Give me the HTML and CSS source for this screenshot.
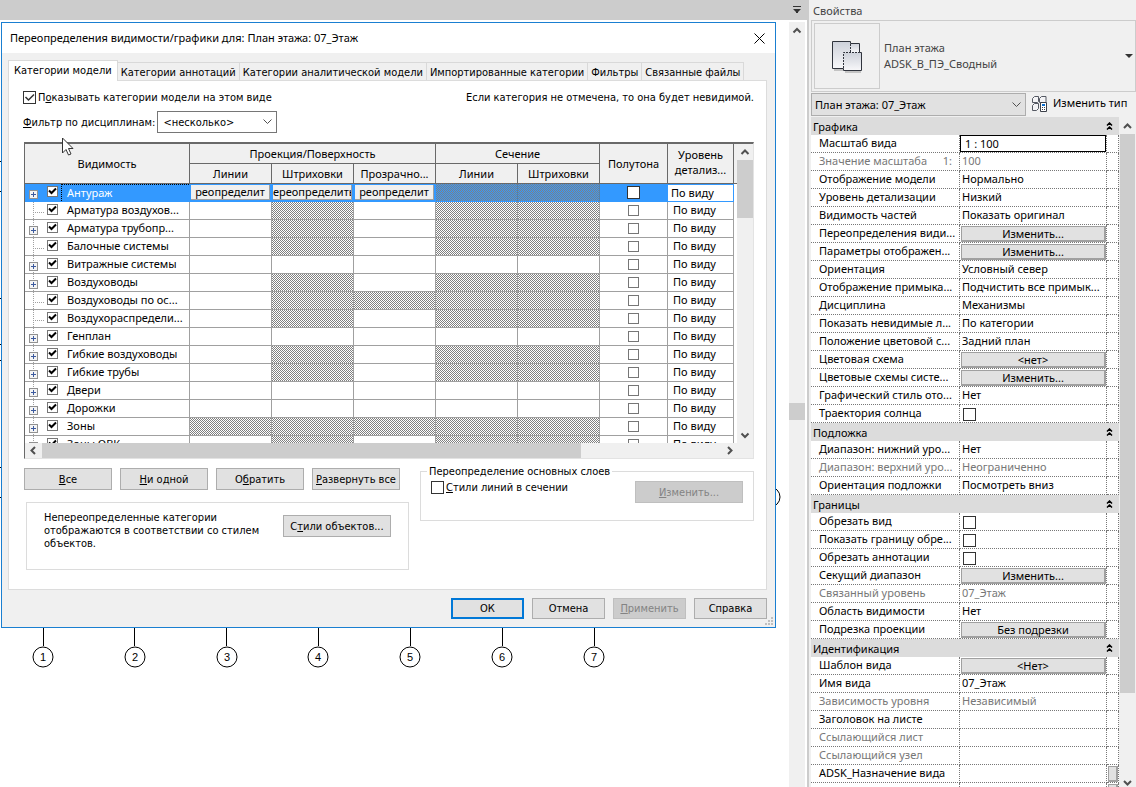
FILE: index.html
```html
<!DOCTYPE html>
<html lang="ru">

<head>
    <meta charset="UTF-8">
    <meta name="viewport" content="width=device-width, initial-scale=1.0">
    <title>Переопределения видимости/графики</title>
    <link rel="stylesheet" href="styles.css">
</head>

<body>
    <main class="workspace">
        <div class="view-bar">
            <button class="view-menu" aria-label="Список видов">
                <svg width="10" height="8" viewBox="0 0 10 8"><path d="M1 0h8v1H1zM1 3h8L6 6v1H4V6z" fill="#333" /></svg>
            </button>
        </div>
        <div class="view">
            <div class="canvas">
                <!-- Drawing with the grid axes -->
                <svg class="drawing" width="789" height="767" viewBox="0 0 789 767">
                    <path d="M0 141.500h2M0 171.500h2M0 278.500h2M0 324.500h2M0 340.500h2M0 447.500h2M0 477.500h2" stroke="#000" />
                    <g fill="none" stroke="#000">
                        <path d="M43.500 607v19M134.500 607v19M226.500 607v19M318.500 607v19M410.500 607v19M502.500 607v19M594.500 607v19" />
                        <circle cx="43" cy="637" r="10" />
                        <circle cx="135" cy="637" r="10" />
                        <circle cx="227" cy="637" r="10" />
                        <circle cx="318" cy="637" r="10" />
                        <circle cx="410" cy="637" r="10" />
                        <circle cx="502" cy="637" r="10" />
                        <circle cx="594" cy="637" r="10" />
                        <circle cx="770" cy="477" r="10" />
                    </g>
                    <g class="axis-labels">
                        <text x="43" y="641">1</text>
                        <text x="135" y="641">2</text>
                        <text x="227" y="641">3</text>
                        <text x="318" y="641">4</text>
                        <text x="410" y="641">5</text>
                        <text x="502" y="641">6</text>
                        <text x="594" y="641">7</text>
                    </g>
                </svg>

                <section class="dialog">
                    <header class="dialog-title">
                        <h1>Переопределения видимости/графики для: План этажа: 07_Этаж</h1>
                        <button class="close" aria-label="Закрыть">
                            <svg width="11" height="11" viewBox="0 0 11 11"><path d="M0.500 0.500l10 10M10.500 0.500l-10 10" stroke="#000" /></svg>
                        </button>
                    </header>

                    <div class="dialog-body">
                        <nav class="tabs">
                            <button class="tab active">Категории модели</button>
                            <button class="tab">Категории аннотаций</button>
                            <button class="tab">Категории аналитической модели</button>
                            <button class="tab">Импортированные категории</button>
                            <button class="tab">Фильтры</button>
                            <button class="tab">Связанные файлы</button>
                        </nav>

                        <div class="tab-panel">
                            <div class="option-row">
                                <label class="option"><input type="checkbox" class="check thin" checked><span>П<u>о</u>казывать категории модели на этом виде</span></label>
                                <span>Если категория не отмечена, то она будет невидимой.</span>
                            </div>
                            <div class="filter-row">
                                <label for="discipline"><u>Ф</u>ильтр по дисциплинам:</label>
                                <select id="discipline" class="discipline">
                                    <option>&lt;несколько&gt;</option>
                                </select>
                            </div>

                            <div class="grid-box">
                                <div class="grid-view">
                                    <table class="categories">
                                        <colgroup>
                                            <col class="col-name">
                                            <col class="col-style">
                                            <col class="col-style">
                                            <col class="col-style">
                                            <col class="col-style">
                                            <col class="col-style">
                                            <col class="col-half">
                                            <col class="col-level">
                                        </colgroup>
                                        <thead>
                                            <tr>
                                                <th rowspan="2">Видимость</th>
                                                <th colspan="3">Проекция/Поверхность</th>
                                                <th colspan="2">Сечение</th>
                                                <th rowspan="2">Полутона</th>
                                                <th rowspan="2" class="two-lines">Уровень детализ...</th>
                                            </tr>
                                            <tr>
                                                <th>Линии</th>
                                                <th>Штриховки</th>
                                                <th>Прозрачно...</th>
                                                <th>Линии</th>
                                                <th>Штриховки</th>
                                            </tr>
                                        </thead>
                                        <tbody>
                                            <tr class="selected">
                                                <td><div class="node first"><button class="expander" aria-label="Развернуть"></button><label><input type="checkbox" class="check" checked><span>Антураж</span></label></div></td>
                                                <td><button class="override">реопределит</button></td>
                                                <td><button class="override">ереопределить</button></td>
                                                <td><button class="override">реопределит</button></td>
                                                <td class="off"></td>
                                                <td class="off"></td>
                                                <td class="half"><input type="checkbox" class="check large" aria-label="Полутона"></td>
                                                <td class="level">По виду</td>
                                            </tr>
                                            <tr>
                                                <td><div class="node"><i class="leaf"></i><label><input type="checkbox" class="check" checked><span>Арматура воздухов...</span></label></div></td>
                                                <td></td><td class="off"></td><td></td><td class="off"></td><td class="off"></td>
                                                <td class="half"><input type="checkbox" class="check" aria-label="Полутона"></td>
                                                <td class="level">По виду</td>
                                            </tr>
                                            <tr>
                                                <td><div class="node"><button class="expander" aria-label="Развернуть"></button><label><input type="checkbox" class="check" checked><span>Арматура трубопр...</span></label></div></td>
                                                <td></td><td class="off"></td><td></td><td class="off"></td><td class="off"></td>
                                                <td class="half"><input type="checkbox" class="check" aria-label="Полутона"></td>
                                                <td class="level">По виду</td>
                                            </tr>
                                            <tr>
                                                <td><div class="node"><i class="leaf"></i><label><input type="checkbox" class="check" checked><span>Балочные системы</span></label></div></td>
                                                <td></td><td class="off"></td><td></td><td class="off"></td><td class="off"></td>
                                                <td class="half"><input type="checkbox" class="check" aria-label="Полутона"></td>
                                                <td class="level">По виду</td>
                                            </tr>
                                            <tr>
                                                <td><div class="node"><button class="expander" aria-label="Развернуть"></button><label><input type="checkbox" class="check" checked><span>Витражные системы</span></label></div></td>
                                                <td></td><td></td><td></td><td></td><td></td>
                                                <td class="half"><input type="checkbox" class="check" aria-label="Полутона"></td>
                                                <td class="level">По виду</td>
                                            </tr>
                                            <tr>
                                                <td><div class="node"><button class="expander" aria-label="Развернуть"></button><label><input type="checkbox" class="check" checked><span>Воздуховоды</span></label></div></td>
                                                <td></td><td class="off"></td><td></td><td class="off"></td><td class="off"></td>
                                                <td class="half"><input type="checkbox" class="check" aria-label="Полутона"></td>
                                                <td class="level">По виду</td>
                                            </tr>
                                            <tr>
                                                <td><div class="node"><i class="leaf"></i><label><input type="checkbox" class="check" checked><span>Воздуховоды по ос...</span></label></div></td>
                                                <td></td><td class="off"></td><td class="off"></td><td class="off"></td><td class="off"></td>
                                                <td class="half"><input type="checkbox" class="check" aria-label="Полутона"></td>
                                                <td class="level">По виду</td>
                                            </tr>
                                            <tr>
                                                <td><div class="node"><i class="leaf"></i><label><input type="checkbox" class="check" checked><span>Воздухораспредели...</span></label></div></td>
                                                <td></td><td class="off"></td><td></td><td class="off"></td><td class="off"></td>
                                                <td class="half"><input type="checkbox" class="check" aria-label="Полутона"></td>
                                                <td class="level">По виду</td>
                                            </tr>
                                            <tr>
                                                <td><div class="node"><button class="expander" aria-label="Развернуть"></button><label><input type="checkbox" class="check" checked><span>Генплан</span></label></div></td>
                                                <td></td><td></td><td></td><td></td><td></td>
                                                <td class="half"><input type="checkbox" class="check" aria-label="Полутона"></td>
                                                <td class="level">По виду</td>
                                            </tr>
                                            <tr>
                                                <td><div class="node"><button class="expander" aria-label="Развернуть"></button><label><input type="checkbox" class="check" checked><span>Гибкие воздуховоды</span></label></div></td>
                                                <td></td><td class="off"></td><td></td><td class="off"></td><td class="off"></td>
                                                <td class="half"><input type="checkbox" class="check" aria-label="Полутона"></td>
                                                <td class="level">По виду</td>
                                            </tr>
                                            <tr>
                                                <td><div class="node"><button class="expander" aria-label="Развернуть"></button><label><input type="checkbox" class="check" checked><span>Гибкие трубы</span></label></div></td>
                                                <td></td><td class="off"></td><td></td><td class="off"></td><td class="off"></td>
                                                <td class="half"><input type="checkbox" class="check" aria-label="Полутона"></td>
                                                <td class="level">По виду</td>
                                            </tr>
                                            <tr>
                                                <td><div class="node"><button class="expander" aria-label="Развернуть"></button><label><input type="checkbox" class="check" checked><span>Двери</span></label></div></td>
                                                <td></td><td></td><td></td><td></td><td></td>
                                                <td class="half"><input type="checkbox" class="check" aria-label="Полутона"></td>
                                                <td class="level">По виду</td>
                                            </tr>
                                            <tr>
                                                <td><div class="node"><button class="expander" aria-label="Развернуть"></button><label><input type="checkbox" class="check" checked><span>Дорожки</span></label></div></td>
                                                <td></td><td></td><td></td><td></td><td></td>
                                                <td class="half"><input type="checkbox" class="check" aria-label="Полутона"></td>
                                                <td class="level">По виду</td>
                                            </tr>
                                            <tr>
                                                <td><div class="node"><button class="expander" aria-label="Развернуть"></button><label><input type="checkbox" class="check" checked><span>Зоны</span></label></div></td>
                                                <td class="off"></td><td class="off"></td><td class="off"></td><td class="off"></td><td class="off"></td>
                                                <td class="half"><input type="checkbox" class="check" aria-label="Полутона"></td>
                                                <td class="level">По виду</td>
                                            </tr>
                                            <tr>
                                                <td><div class="node"><button class="expander" aria-label="Развернуть"></button><label><input type="checkbox" class="check" checked><span>Зоны ОВК</span></label></div></td>
                                                <td></td><td class="off"></td><td></td><td class="off"></td><td class="off"></td>
                                                <td class="half"><input type="checkbox" class="check" aria-label="Полутона"></td>
                                                <td class="level">По виду</td>
                                            </tr>
                                        </tbody>
                                    </table>
                                </div>
                                <div class="vscroll grid-vscroll">
                                    <svg width="16" height="16" viewBox="0 0 16 16"><path d="M4.500 10L8 6.500L11.500 10" class="arrow" /></svg>
                                    <div class="thumb"></div>
                                    <svg width="16" height="16" viewBox="0 0 16 16"><path d="M4.500 6.500L8 10L11.500 6.500" class="arrow" /></svg>
                                </div>
                                <div class="hscroll">
                                    <svg width="17" height="15" viewBox="0 0 17 15"><path d="M10 4L6.500 7.500L10 11" class="arrow" /></svg>
                                    <div class="thumb"></div>
                                    <svg width="17" height="15" viewBox="0 0 17 15"><path d="M7 4L10.500 7.500L7 11" class="arrow" /></svg>
                                </div>
                            </div>

                            <div class="below">
                                <div class="below-left">
                                    <div class="buttons">
                                        <button class="btn"><u>В</u>се</button>
                                        <button class="btn"><u>Н</u>и одной</button>
                                        <button class="btn">О<u>б</u>ратить</button>
                                        <button class="btn"><u>Р</u>азвернуть все</button>
                                    </div>
                                    <div class="note">
                                        <p>Непереопределенные категории отображаются в соответствии со стилем объектов.</p>
                                        <button class="btn wide">С<u>т</u>или объектов...</button>
                                    </div>
                                </div>
                                <fieldset class="layers">
                                    <legend>Переопределение основных слоев</legend>
                                    <label class="option"><input type="checkbox" class="check thin"><span><u>С</u>тили линий в сечении</span></label>
                                    <button class="btn wide" disabled><u>И</u>зменить...</button>
                                </fieldset>
                            </div>
                        </div>

                        <footer class="dialog-footer">
                            <button class="btn primary">ОК</button>
                            <button class="btn">Отмена</button>
                            <button class="btn" disabled><u>П</u>рименить</button>
                            <button class="btn">Справка</button>
                        </footer>
                    </div>
                    <svg class="grip" width="8" height="8" viewBox="0 0 8 8"><path d="M6 0h2v2H6zM3 3h2v2H3zM6 3h2v2H6zM0 6h2v2H0zM3 6h2v2H3zM6 6h2v2H6z" fill="#bfbfbf" /></svg>
                </section>

                <svg class="cursor" width="13" height="20" viewBox="0 0 13 20"><path d="M1.500 1v15l3.500-3.500l2.500 5.500l2.500-1l-2.500-5.500h4.500z" fill="#fff" stroke="#333" /></svg>
            </div>
            <div class="vscroll view-vscroll">
                <svg width="16" height="16" viewBox="0 0 16 16"><path d="M4.500 10.500L8 7L11.500 10.500" class="arrow" /></svg>
                <div class="thumb"></div>
            </div>
        </div>
    </main>

    <aside class="properties">
        <h2>Свойства</h2>
        <div class="type-box">
            <div class="type-icon">
                <svg width="34" height="34" viewBox="0 0 34 34">
                    <defs>
                        <linearGradient id="sheet" x1="0" y1="0" x2="0" y2="1">
                            <stop offset="0" stop-color="#cdd1da" />
                            <stop offset="1" stop-color="#f8f8fa" />
                        </linearGradient>
                    </defs>
                    <path d="M4 31h9M15 33h16" stroke="#c4c4c4" stroke-width="2" />
                    <path d="M20.500 4.500h9v9h-9z" fill="url(#sheet)" />
                    <path d="M2.500 2.500h18v11h-7v16h-11z" fill="url(#sheet)" />
                    <path d="M13.500 13.500h18v18h-18z" fill="url(#sheet)" />
                    <path d="M20.500 2.500h-18v27h11M20.500 4.500h9v9M31.500 13.500v18h-18v-2M29.500 13.500h2M20.500 2.500v2" fill="none" stroke="#30343d" />
                    <path d="M20.500 5v8M13.500 29v-15.500h16" fill="none" stroke="#30343d" stroke-dasharray="2 1" />
                </svg>
            </div>
            <div class="type-name">План этажа<br>ADSK_В_ПЭ_Сводный</div>
            <button class="type-menu" aria-label="Выбор типа">
                <svg width="8" height="4" viewBox="0 0 8 4"><path d="M0 0h8L4 4z" fill="#333" /></svg>
            </button>
        </div>
        <div class="instance-row">
            <select class="instance" aria-label="Экземпляр">
                <option>План этажа: 07_Этаж</option>
            </select>
            <button class="edit-type">
                <svg width="17" height="17" viewBox="0 0 17 17">
                    <path d="M1.500 3.500l2-2h4v5l-1 1h-5zM8.500 3.500l2-2h4.500v5l-1 1h-5.500zM1.500 10.500l2-2h4v5l-2 2h-4z" fill="#f4f4f6" stroke="#555963" />
                    <path d="M9.500 7.500h6v9h-6z" fill="#fff" stroke="#3c4049" />
                    <path d="M11 9h3v2h-3z" fill="#0a6ed1" />
                    <path d="M11 12h1v1h-1zM13 12h1v1h-1zM11 14h1v1h-1zM13 14h1v1h-1z" fill="#3c4049" />
                </svg>
                Изменить тип
            </button>
        </div>

        <div class="prop-area">
            <table class="props">
                <colgroup>
                    <col class="col-prop">
                    <col class="col-value">
                    <col class="col-link">
                </colgroup>
                <tbody>
                    <tr class="group"><th colspan="3"><button>Графика <svg width="7" height="8" viewBox="0 0 7 8"><path d="M1 3.500L3.500 1L6 3.500M1 7.500L3.500 5L6 7.500" /></svg></button></th></tr>
                    <tr><th><label for="scale">Масштаб вида</label></th><td><input id="scale" class="scale" type="text" value="1 : 100"></td><td></td></tr>
                    <tr class="readonly"><th><span class="split"><span>Значение масштаба</span><span>1:</span></span></th><td>100</td><td></td></tr>
                    <tr><th>Отображение модели</th><td>Нормально</td><td></td></tr>
                    <tr><th>Уровень детализации</th><td>Низкий</td><td></td></tr>
                    <tr><th>Видимость частей</th><td>Показать оригинал</td><td></td></tr>
                    <tr><th>Переопределения види...</th><td><button class="prop-btn">Изменить...</button></td><td></td></tr>
                    <tr><th>Параметры отображен...</th><td><button class="prop-btn">Изменить...</button></td><td></td></tr>
                    <tr><th>Ориентация</th><td>Условный север</td><td></td></tr>
                    <tr><th>Отображение примыка...</th><td>Подчистить все примык...</td><td></td></tr>
                    <tr><th>Дисциплина</th><td>Механизмы</td><td></td></tr>
                    <tr><th>Показать невидимые л...</th><td>По категории</td><td></td></tr>
                    <tr><th>Положение цветовой с...</th><td>Задний план</td><td></td></tr>
                    <tr><th>Цветовая схема</th><td><button class="prop-btn">&lt;нет&gt;</button></td><td></td></tr>
                    <tr><th>Цветовые схемы систе...</th><td><button class="prop-btn">Изменить...</button></td><td></td></tr>
                    <tr><th>Графический стиль ото...</th><td>Нет</td><td></td></tr>
                    <tr><th><label for="sun">Траектория солнца</label></th><td><input id="sun" type="checkbox" class="check thin"></td><td></td></tr>
                    <tr class="group"><th colspan="3"><button>Подложка <svg width="7" height="8" viewBox="0 0 7 8"><path d="M1 3.500L3.500 1L6 3.500M1 7.500L3.500 5L6 7.500" /></svg></button></th></tr>
                    <tr><th>Диапазон: нижний уро...</th><td>Нет</td><td></td></tr>
                    <tr class="readonly"><th>Диапазон: верхний уро...</th><td>Неограниченно</td><td></td></tr>
                    <tr><th>Ориентация подложки</th><td>Посмотреть вниз</td><td></td></tr>
                    <tr class="group"><th colspan="3"><button>Границы <svg width="7" height="8" viewBox="0 0 7 8"><path d="M1 3.500L3.500 1L6 3.500M1 7.500L3.500 5L6 7.500" /></svg></button></th></tr>
                    <tr><th><label for="crop">Обрезать вид</label></th><td><input id="crop" type="checkbox" class="check thin"></td><td></td></tr>
                    <tr><th><label for="crop-border">Показать границу обре...</label></th><td><input id="crop-border" type="checkbox" class="check thin"></td><td></td></tr>
                    <tr><th><label for="crop-notes">Обрезать аннотации</label></th><td><input id="crop-notes" type="checkbox" class="check thin"></td><td></td></tr>
                    <tr><th>Секущий диапазон</th><td><button class="prop-btn">Изменить...</button></td><td></td></tr>
                    <tr class="readonly"><th>Связанный уровень</th><td>07_Этаж</td><td></td></tr>
                    <tr><th>Область видимости</th><td>Нет</td><td></td></tr>
                    <tr><th>Подрезка проекции</th><td><button class="prop-btn">Без подрезки</button></td><td></td></tr>
                    <tr class="group"><th colspan="3"><button>Идентификация <svg width="7" height="8" viewBox="0 0 7 8"><path d="M1 3.500L3.500 1L6 3.500M1 7.500L3.500 5L6 7.500" /></svg></button></th></tr>
                    <tr><th>Шаблон вида</th><td><button class="prop-btn">&lt;Нет&gt;</button></td><td></td></tr>
                    <tr><th>Имя вида</th><td>07_Этаж</td><td></td></tr>
                    <tr class="readonly"><th>Зависимость уровня</th><td>Независимый</td><td></td></tr>
                    <tr><th>Заголовок на листе</th><td></td><td></td></tr>
                    <tr class="readonly"><th>Ссылающийся лист</th><td></td><td></td></tr>
                    <tr class="readonly"><th>Ссылающийся узел</th><td></td><td></td></tr>
                    <tr><th>ADSK_Назначение вида</th><td></td><td><button class="prop-btn" aria-label="Связать"></button></td></tr>
                    <tr><th>ADSK_Штамп Раздел</th><td></td><td><button class="prop-btn" aria-label="Связать"></button></td></tr>
                </tbody>
            </table>
            <div class="vscroll prop-vscroll">
                <svg width="15" height="17" viewBox="0 0 15 17"><path d="M4 11L7.500 7.500L11 11" class="arrow" /></svg>
                <div class="thumb"></div>
                <svg width="15" height="10" viewBox="0 0 15 10"><path d="M4 4L7.500 7.500L11 4" class="arrow" /></svg>
            </div>
        </div>
    </aside>
</body>

</html>
```
FILE: styles.css
```css
* {
    box-sizing: border-box;
}

body {
    display: flex;
    height: 100vh;
    margin: 0;
    overflow: hidden;
    background-color: #fff;
    color: #000;
    font: 11px/13px "DejaVu Sans Condensed", "DejaVu Sans", sans-serif;
}

button,
input,
select {
    margin: 0;
    padding: 0;
    border: none;
    border-radius: 0;
    color: inherit;
    font: inherit;
}

button {
    white-space: nowrap;
}

svg {
    display: block;
    flex: none;
}

/* Drawing area */

.workspace {
    display: flex;
    flex: 1;
    flex-direction: column;
    min-width: 0;
}

.view-bar {
    display: flex;
    justify-content: flex-end;
    flex: none;
    height: 20px;
    padding: 6px 5px 0 0;
    background-color: #ccc;
}

.view-menu {
    height: 8px;
    background: none;
}

.view {
    display: flex;
    flex: 1;
    min-height: 0;
}

.canvas {
    position: relative;
    flex: 1;
    min-width: 0;
    overflow: hidden;
}

.axis-labels {
    font: 11px "Liberation Sans", sans-serif;
    text-anchor: middle;
}

.cursor {
    position: absolute;
    left: 61px;
    top: 117px;
}

/* Scroll bars */

.vscroll,
.hscroll {
    display: flex;
    background-color: #f0f0f0;
}

.vscroll {
    flex-direction: column;
}

.thumb {
    background-color: #cdcdcd;
}

.arrow {
    fill: none;
    stroke: #505050;
    stroke-width: 2;
}

.view-vscroll {
    width: 16px;
    margin: 2px 2px 0 0;
}

.view-vscroll .thumb {
    height: 17px;
    margin-top: 365px;
}

/* Dialog */

.dialog {
    position: absolute;
    left: 1px;
    top: 2px;
    width: 775px;
    border: 1px solid #1a7fd1;
    background-color: #f0f0f0;
}

.dialog-title {
    display: flex;
    justify-content: space-between;
    align-items: center;
    height: 30px;
    padding: 0 10px 0 8px;
    background-color: #fff;
}

.dialog-title h1 {
    margin: 0;
    font: 11px/16px "Noto Sans", sans-serif;
}

.close {
    background: none;
}

.dialog-body {
    padding: 7px 8px 8px 6px;
}

.tabs {
    display: flex;
    align-items: flex-end;
}

.tab {
    height: 18px;
    padding: 1px 3px 0;
    border: 1px solid #d9d9d9;
    border-width: 1px 1px 0 0;
    background-color: #f0f0f0;
}

.tab.active {
    height: 21px;
    margin-bottom: -1px;
    padding: 0 5px 2px;
    border-left-width: 1px;
    background-color: #fff;
}

.tab-panel {
    padding: 10px 12px 19px 14px;
    border: 1px solid #dcdcdc;
    background-color: #fff;
}

.option-row {
    display: flex;
    justify-content: space-between;
}

.option {
    display: flex;
    align-items: center;
    gap: 2px;
}

.check {
    display: block;
    flex: none;
    appearance: none;
    width: 11px;
    height: 11px;
    border: 1px solid #767676;
    background: #fff center no-repeat;
}

.check:checked {
    background-image: url("data:image/svg+xml,%3Csvg xmlns='http://www.w3.org/2000/svg' width='9' height='9'%3E%3Cpath d='M1 3.500L3.500 6L8 1.500' fill='none' stroke='black' stroke-width='2'/%3E%3C/svg%3E");
}

.check.thin {
    width: 13px;
    height: 13px;
    border-color: #333;
}

.check.thin:checked {
    background-image: url("data:image/svg+xml,%3Csvg xmlns='http://www.w3.org/2000/svg' width='11' height='11'%3E%3Cpath d='M1.500 5L4.500 8L10 2.500' fill='none' stroke='%23333' stroke-width='1.500'/%3E%3C/svg%3E");
}

.filter-row {
    display: flex;
    align-items: center;
    gap: 2px;
    margin-top: 7px;
}

.discipline,
.instance {
    appearance: none;
    border: 1px solid #767676;
    background: #fff url("data:image/svg+xml,%3Csvg xmlns='http://www.w3.org/2000/svg' width='9' height='6'%3E%3Cpath d='M0.500 0.500L4.500 4.500L8.500 0.500' fill='none' stroke='%23505050'/%3E%3C/svg%3E") right 4px center no-repeat;
}

.discipline {
    width: 120px;
    height: 22px;
    padding: 0 5px;
}

/* Category grid */

.grid-box {
    display: grid;
    grid-template-columns: minmax(0, 1fr) 16px;
    margin-top: 9px;
    margin-left: 1px;
    border: 1px solid #e3e3e3;
    border-top: 2px solid #696969;
    border-left: 1px solid #696969;
}

.grid-view {
    height: 299px;
    overflow: hidden;
    background: linear-gradient(#f0f0f0 39px, #696969 39px, #696969 40px, #fff 40px);
}

.categories {
    width: 709px;
    table-layout: fixed;
    border-spacing: 0;
    font: 11px/16px "Noto Sans", sans-serif;
}

.col-name {
    width: 165px;
}

.col-style {
    width: 82px;
}

.col-half {
    width: 68px;
}

.col-level {
    width: 66px;
}

.categories th {
    height: 20px;
    padding: 0;
    border: 1px solid #696969;
    border-width: 0 1px 1px 0;
    background-color: #f0f0f0;
    font-weight: normal;
}

.categories .two-lines {
    padding: 0 6px 4px;
    line-height: 15px;
}

.categories td {
    height: 18px;
    padding: 0;
    border: 1px solid #a0a0a0;
    border-width: 0 1px 1px 0;
    vertical-align: top;
}

.categories .off {
    background-image: url("data:image/svg+xml,%3Csvg xmlns='http://www.w3.org/2000/svg' width='2' height='2'%3E%3Cpath d='M0 0h1v1H0zM1 1h1v1H1z' fill='%23808080'/%3E%3C/svg%3E");
}

.node {
    display: flex;
    height: 17px;
    padding-left: 4px;
    background: repeating-linear-gradient(#a0a0a0 0 1px, transparent 1px 2px) 8px 0 / 1px 100% no-repeat;
}

.node label {
    display: flex;
    gap: 9px;
    overflow: hidden;
    white-space: nowrap;
}

.node .check {
    margin-top: 2px;
}

.expander,
.leaf {
    flex: none;
    width: 9px;
    height: 9px;
    margin: 6px 9px 0 0;
}

.expander {
    border: 1px solid #919191;
    background:
        linear-gradient(#3c5a9e, #3c5a9e) center / 5px 1px no-repeat,
        linear-gradient(#3c5a9e, #3c5a9e) center / 1px 5px no-repeat,
        #f4f4f4;
}

/* Dotted branch from the tree line to the check box */
.leaf {
    width: 14px;
    margin: 6px 0 0 4px;
    background: repeating-linear-gradient(90deg, #a0a0a0 0 1px, transparent 1px 2px) 0 4px / 11px 1px no-repeat;
}

.categories .half {
    padding: 3px 1px 0 0;
}

.half .check {
    margin: 0 auto;
}

.check.large {
    width: 13px;
    height: 13px;
    border-color: #333;
}

.categories .level {
    padding-left: 5px;
}

.categories .selected td {
    border-color: #39f;
    background-color: #39f;
}

.categories .selected .off {
    border-right-color: #5580a8;
}

.categories .selected .half {
    padding-top: 2px;
}

.categories .selected .level {
    padding-left: 3px;
    border-top: 1px solid #39f;
    background-color: #fff;
}

.node.first {
    background: none;
    color: #fff;
}

.node.first span {
    flex: 1;
    margin-left: -6px;
    padding-left: 5px;
    border: 1px dotted #000;
    border-width: 1px 0 0 1px;
}

.node.first label {
    flex: 1;
}

.override {
    display: block;
    width: 79px;
    height: 15px;
    margin: 1px auto 0;
    overflow: hidden;
    border: 1px solid #a0a0a0;
    border-width: 0 1px 1px 0;
    background-color: #f0f0f0;
    line-height: 14px;
    color: #000;
}

.grid-vscroll {
    justify-content: flex-start;
}

.grid-vscroll .thumb {
    height: 58px;
    margin-bottom: auto;
}

.hscroll {
    grid-column: 1 / -1;
    height: 15px;
    padding-right: 15px;
    justify-content: space-between;
}

.hscroll .thumb {
    width: 539px;
    margin-right: auto;
}

/* Controls below the grid */

.below {
    display: flex;
    gap: 11px;
    margin-left: 1px;
}

.below-left {
    width: 385px;
    padding-top: 9px;
}

.buttons {
    display: flex;
    gap: 8px;
}

.btn {
    width: 88px;
    height: 22px;
    border: 1px solid #adadad;
    background-color: #e1e1e1;
}

.btn:disabled {
    border-color: #bfbfbf;
    background-color: #ccc;
    color: #838383;
}

.btn.wide {
    flex: none;
    width: 108px;
}

.note {
    display: flex;
    justify-content: space-between;
    align-items: flex-start;
    height: 68px;
    margin: 12px 0 0 2px;
    padding: 12px 17px 0;
    border: 1px solid #dcdcdc;
}

.note p {
    width: 225px;
    margin: -4px 0 0;
}

.layers {
    display: flex;
    flex: 1;
    justify-content: space-between;
    align-items: flex-start;
    height: 56px;
    margin: 6px 0 0;
    padding: 3px 10px 0;
    border: 1px solid #dcdcdc;
}

.layers legend {
    margin-left: -4px;
    padding: 0 2px;
}

.dialog-footer {
    display: flex;
    justify-content: flex-end;
    gap: 8px;
    padding-top: 8px;
}

.dialog-footer .btn {
    width: 73px;
    height: 21px;
}

.dialog-footer .primary {
    border: 2px solid #0078d7;
}

.grip {
    position: absolute;
    right: 2px;
    bottom: 2px;
}

/* Properties palette */

.properties {
    display: flex;
    flex-direction: column;
    width: 329px;
    border-left: 2px solid #ccc;
    padding-left: 2px;
    background-color: #f0f0f0;
    font: 11px/16px "Noto Sans", sans-serif;
}

.properties h2 {
    margin: 0;
    padding: 3px 2px 1px;
    color: #444;
    font-size: 11px;
    font-weight: normal;
}

.type-box {
    display: flex;
    align-items: center;
    padding: 2px;
    border: 1px solid #ccc;
    color: #444;
}

.type-icon {
    display: flex;
    justify-content: center;
    align-items: center;
    width: 66px;
    height: 66px;
    border: 1px solid #ccc;
}

.type-name {
    flex: 1;
    padding-left: 4px;
}

.type-menu {
    background: none;
}

.instance-row {
    display: flex;
    gap: 5px;
    padding: 1px 0;
}

.instance {
    flex: 1;
    height: 23px;
    min-width: 0;
    padding: 0 3px;
    border-color: #adadad;
    background-color: #e1e1e1;
}

.edit-type {
    display: flex;
    align-items: center;
    gap: 5px;
    width: 105px;
    height: 20px;
    background: none;
}

.prop-area {
    display: flex;
    flex: 1;
    align-items: flex-start;
    min-height: 0;
    overflow: hidden;
}

.props {
    flex: 1;
    table-layout: fixed;
    border-spacing: 0;
    background-color: #fff;
}

.col-value {
    width: 147px;
}

.col-link {
    width: 12px;
}

.props th,
.props td {
    height: 18px;
    padding: 0 0 0 2px;
    border: 1px dotted #777;
    border-width: 0 1px 1px 0;
    overflow: hidden;
    font-weight: normal;
    line-height: 15px;
    text-align: left;
    vertical-align: top;
    white-space: nowrap;
}

.props th {
    padding-left: 8px;
}

.props td:nth-child(3) {
    padding: 0;
}

.props .group th {
    padding: 0;
    border: none;
    background-color: #dcdcdc;
}

.group button {
    display: flex;
    justify-content: space-between;
    align-items: center;
    width: 100%;
    height: 18px;
    padding: 0 6px 0 2px;
    background: none;
}

.group path {
    fill: none;
    stroke: #000;
    stroke-width: 1.500;
}

.readonly {
    color: #777;
}

.split {
    display: flex;
    justify-content: space-between;
    padding-right: 7px;
}

.props .check {
    margin: 3px 0 0 1px;
}

.scale {
    display: block;
    width: 146px;
    height: 17px;
    margin-left: -2px;
    padding: 0 4px;
    border: 1px solid #000;
}

.prop-btn {
    display: block;
    width: 145px;
    height: 16px;
    margin: 1px 0 0 -1px;
    border: 1px solid #a0a0a0;
    border-width: 1px 2px 2px 1px;
    background-color: #e1e1e1;
    line-height: 13px;
}

td:nth-child(3) .prop-btn {
    width: 10px;
    margin-left: 1px;
}

.prop-vscroll {
    align-self: stretch;
    width: 16px;
    margin-left: 1px;
}

.prop-vscroll .thumb {
    height: 559px;
    margin-bottom: auto;
    border-right: 1px solid #f0f0f0;
}
```
